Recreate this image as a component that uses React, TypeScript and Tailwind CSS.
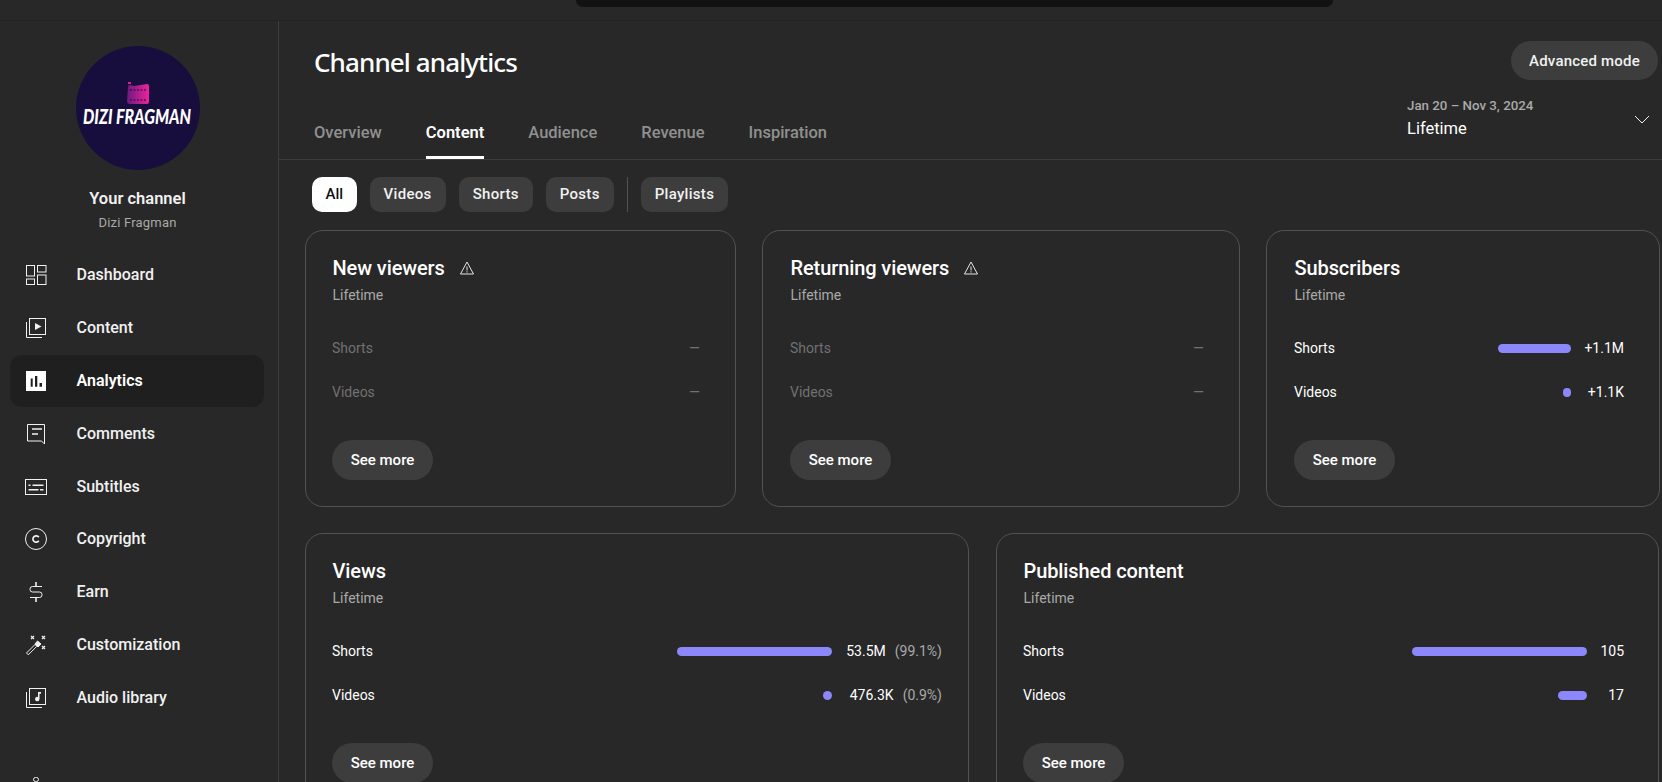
import type { ReactNode } from "react";

const stroke = { fill: "none", stroke: "currentColor", strokeWidth: 1 };

function DashboardIcon() {
  return (
    <svg width="24" height="24" viewBox="0 0 24 24" {...stroke}>
      <rect x="2.5" y="2.5" width="8" height="10.5" />
      <rect x="13.5" y="2.5" width="8.5" height="6.5" />
      <rect x="2.5" y="16" width="8" height="5.5" />
      <rect x="13.5" y="12" width="8.5" height="9.5" />
    </svg>
  );
}

function ContentIcon() {
  return (
    <svg width="24" height="24" viewBox="0 0 24 24" {...stroke}>
      <rect x="5.5" y="2.5" width="16" height="16" />
      <path d="M2.5 6v15.5H18" />
      <path d="M11 7v7l6.5-3.5z" fill="currentColor" stroke="none" />
    </svg>
  );
}

function AnalyticsIcon() {
  return (
    <svg width="24" height="24" viewBox="0 0 24 24">
      <path
        fillRule="evenodd"
        fill="#fff"
        d="M2 2h20v20H2zM6.7 9.5v8.2h2V9.5zM11 7v10.7h2.3V7zM15.5 14v3.7h2.5V14z"
      />
    </svg>
  );
}

function CommentsIcon() {
  return (
    <svg width="24" height="24" viewBox="0 0 24 24" {...stroke}>
      <path d="M3.5 2.5h17v19.5l-3-3H3.5z" />
      <path d="M8 7h10M8 12h6" strokeWidth="1.4" />
    </svg>
  );
}

function SubtitlesIcon() {
  return (
    <svg width="24" height="24" viewBox="0 0 24 24" {...stroke}>
      <rect x="1.5" y="4.5" width="21" height="15" />
      <path d="M4.5 10.3h2M8.5 10.3h11M4.5 14.7h10M16 14.7h3.5" strokeWidth="1.4" />
    </svg>
  );
}

function CopyrightIcon() {
  return (
    <svg width="24" height="24" viewBox="0 0 24 24" {...stroke}>
      <circle cx="12" cy="12" r="10.5" />
      <path d="M14.8 10.2a3.2 3.2 0 1 0 0 3.6" strokeWidth="1.7" />
    </svg>
  );
}

function EarnIcon() {
  return (
    <svg width="24" height="24" viewBox="0 0 24 24" {...stroke}>
      <path d="M18 6.5H8.5a2.5 2.5 0 0 0-2.5 2.5v.5a2.5 2.5 0 0 0 2.5 2.5h7a2.5 2.5 0 0 1 2.5 2.5v.5a2.5 2.5 0 0 1-2.5 2.5H6" />
      <path d="M12 2v4.5M12 17.5V22" strokeWidth="1.6" />
    </svg>
  );
}

function CustomizationIcon() {
  return (
    <svg width="24" height="24" viewBox="0 0 24 24" {...stroke}>
      <path d="M2.5 20l1.8 1.8 8.5-8.5-1.8-1.8z" />
      <path d="M13.5 8l3.5 3-3 3-3-3z" fill="currentColor" />
      <path d="M7 3l3 3M10 3L7 6M18 3l3 3M21 3l-3 3M18 13l3 3M21 13l-3 3" strokeWidth="1.2" />
    </svg>
  );
}

function AudioIcon() {
  return (
    <svg width="24" height="24" viewBox="0 0 24 24" {...stroke}>
      <rect x="5.5" y="2.5" width="16" height="16" />
      <path d="M2.5 6v15.5H18" />
      <path d="M14 6h3v1.8h-1.5v5.2a2.2 2.2 0 1 1-1.5-2.1z" fill="currentColor" stroke="none" />
    </svg>
  );
}

function WarningIcon() {
  return (
    <svg width="16" height="16" viewBox="0 0 16 16" fill="none" stroke="#e5e5e5" strokeWidth="1">
      <path d="M8 2L1.5 14h13z" />
      <path d="M8 6.5v4M8 11.3v1.2" />
    </svg>
  );
}

const navItems: { label: string; icon: ReactNode; active?: boolean }[] = [
  { label: "Dashboard", icon: <DashboardIcon /> },
  { label: "Content", icon: <ContentIcon /> },
  { label: "Analytics", icon: <AnalyticsIcon />, active: true },
  { label: "Comments", icon: <CommentsIcon /> },
  { label: "Subtitles", icon: <SubtitlesIcon /> },
  { label: "Copyright", icon: <CopyrightIcon /> },
  { label: "Earn", icon: <EarnIcon /> },
  { label: "Customization", icon: <CustomizationIcon /> },
  { label: "Audio library", icon: <AudioIcon /> },
];

function Avatar() {
  return (
    <div className="w-[124px] h-[124px] rounded-full bg-[#170e3d] flex flex-col items-center pt-[36px]">
      <svg width="24" height="25" viewBox="0 0 24 25">
        <defs>
          <linearGradient id="film" x1="0" y1="0" x2="1" y2="0">
            <stop offset="0" stopColor="#6d1a80" />
            <stop offset="1" stopColor="#f0229a" />
          </linearGradient>
        </defs>
        <rect x="2" y="0" width="3" height="2" fill="#d020a0" />
        <path d="M2 5q0-2 2-2l4 1 13-2q2 0 2 2v16q0 2-2 2H4q-3 0-3-3z" fill="url(#film)" />
        <path d="M4 8h16M4 18h16" stroke="#170e3d" strokeWidth="1.2" strokeDasharray="2 1.5" />
      </svg>
      <div className="font-['Lato'] font-black italic text-white text-[21px] leading-[22px] -mt-[2px] whitespace-nowrap scale-x-[0.76]">
        DIZI FRAGMAN
      </div>
    </div>
  );
}

function Sidebar() {
  return (
    <aside className="w-[279px] shrink-0 border-r border-[#3d3d3d] flex flex-col">
      <div className="pr-[3px] flex flex-col items-center">
        <div className="mt-[25px]">
          <Avatar />
        </div>
        <div className="mt-[17px] text-[16.5px] leading-[24px] font-semibold text-[#f1f1f1]">Your channel</div>
        <div className="mt-[3px] text-[13px] leading-[18px] text-[#aaaaaa] tracking-[0.2px]">Dizi Fragman</div>
      </div>
      <nav className="mt-[17px] w-full pl-[10px] pr-[14px]">
        {navItems.map((item) => (
          <div
            key={item.label}
            className={
              item.active
                ? "h-[52.8px] flex items-center rounded-[12px] bg-[#1f1f1f] font-semibold text-white"
                : "h-[52.8px] flex items-center rounded-[12px] font-medium text-[#f1f1f1]"
            }
          >
            <div className="w-[66.5px] pl-[14px] shrink-0 flex">{item.icon}</div>
            <span className="text-[16px]">{item.label}</span>
          </div>
        ))}
      </nav>
      <div className="mt-[53px] ml-[33px] w-[6px] h-[6px] rounded-full border border-[#f1f1f1]" />
    </aside>
  );
}

function Chip({ label, active }: { label: string; active?: boolean }) {
  return (
    <button
      className={
        active
          ? "h-[35px] px-[13.5px] rounded-[10px] bg-white text-[#0f0f0f] text-[15px] font-medium"
          : "h-[35px] px-[14px] rounded-[10px] bg-[#3d3d3d] text-[#f1f1f1] text-[15px] font-medium tracking-[0.3px]"
      }
    >
      {label}
    </button>
  );
}

function Row({
  label,
  value,
  pct,
  bar,
  valueWidth,
  muted,
}: {
  label: string;
  value: string;
  pct?: string;
  bar?: number;
  valueWidth?: number;
  muted?: boolean;
}) {
  return (
    <div className="h-[44px] flex items-center justify-between text-[14px]">
      <span className={muted ? "text-[#717171]" : "text-white"}>{label}</span>
      <div className="flex items-center">
        {bar !== undefined && (
          <div className="h-[9px] rounded-full bg-[#8c87fa] mr-[13px]" style={{ width: bar }} />
        )}
        <div className="text-right whitespace-nowrap" style={{ width: valueWidth }}>
          <span className={muted ? "text-[#717171]" : "text-white"}>{value}</span>
          {pct && <span className="ml-[9px] text-[#aaaaaa]">{pct}</span>}
        </div>
      </div>
    </div>
  );
}

function Card({
  title,
  warn,
  className,
  children,
}: {
  title: string;
  warn?: boolean;
  className: string;
  children: ReactNode;
}) {
  return (
    <section className={"border border-[#525252] rounded-[18px] pt-[23px] pb-[26px] " + className}>
      <div className="flex items-center h-[28px] ml-[0.5px]">
        <h2 className="text-[20px] leading-[28px] font-medium text-white tracking-[-0.1px]">{title}</h2>
        {warn && (
          <span className="ml-[14px]">
            <WarningIcon />
          </span>
        )}
      </div>
      <div className="mt-[3px] ml-[0.5px] text-[14px] leading-[20px] text-[#aaaaaa]">Lifetime</div>
      <div className="mt-[21px]">{children}</div>
      <button className="mt-[26px] w-[101px] h-[40px] rounded-full bg-[#3d3d3d] text-white text-[15px] font-medium">
        See more
      </button>
    </section>
  );
}

export default function App() {
  return (
    <div className="w-[1662px] h-[782px] overflow-hidden bg-[#282828] font-['Roboto',sans-serif] flex flex-col">
      <header className="h-[21px] shrink-0 border-b border-[#232323] flex justify-center pl-[247px]">
        <div className="w-[757px] h-[7px] bg-[#121212] rounded-b-[16px]" />
      </header>
      <div className="flex flex-1 min-h-0">
        <Sidebar />
        <main className="flex-1 min-w-0">
          <div className="h-[139px] border-b border-[#3d3d3d] flex flex-col">
            <div className="mt-[20px] h-[39px] flex items-center justify-between pl-[35px] pr-[4px]">
              <h1 className="font-['Noto_Sans',sans-serif] font-medium text-[26px] text-white pt-[4px] tracking-[-0.9px]">
                Channel analytics
              </h1>
              <button className="w-[147px] h-[39px] pt-[1px] rounded-full bg-[#3d3d3d] text-[#f1f1f1] text-[15px] font-medium tracking-[0.2px]">
                Advanced mode
              </button>
            </div>
            <div className="flex flex-1 justify-between pl-[35px]">
              <div className="flex items-end gap-[44px]">
                {["Overview", "Content", "Audience", "Revenue", "Inspiration"].map((tab) => (
                  <div
                    key={tab}
                    className={
                      tab === "Content"
                        ? "pb-[11px] border-b-[3px] border-white text-[16.5px] leading-[24px] font-semibold text-white"
                        : "pb-[14px] text-[16.5px] leading-[24px] font-medium text-[#909090]"
                    }
                  >
                    {tab}
                  </div>
                ))}
              </div>
              <div className="w-[255px] pt-[18px] relative">
                <div className="text-[13.3px] leading-[16px] font-medium text-[#aaaaaa]">Jan 20 – Nov 3, 2024</div>
                <div className="mt-[4px] text-[16.5px] leading-[22px] text-white">Lifetime</div>
                <svg
                  className="absolute left-[226px] top-[33px]"
                  width="18"
                  height="14"
                  viewBox="0 0 18 14"
                  fill="none"
                  stroke="#f1f1f1"
                  strokeWidth="1"
                >
                  <path d="M2 3l7 7 7-7" />
                </svg>
              </div>
            </div>
          </div>
          <div className="mt-[17px] pl-[33px] flex items-center gap-[13px]">
            <Chip label="All" active />
            <Chip label="Videos" />
            <Chip label="Shorts" />
            <Chip label="Posts" />
            <div className="w-px h-[35px] bg-[#525252]" />
            <Chip label="Playlists" />
          </div>
          <div className="mt-[18px] pl-[26px] flex flex-col gap-[26px]">
            <div className="flex gap-[26px]">
              <Card title="New viewers" warn className="w-[431px] pl-[26px] pr-[35px]">
                <Row label="Shorts" value="—" muted />
                <Row label="Videos" value="—" muted />
              </Card>
              <Card title="Returning viewers" warn className="w-[478px] pl-[27px] pr-[35px]">
                <Row label="Shorts" value="—" muted />
                <Row label="Videos" value="—" muted />
              </Card>
              <Card title="Subscribers" className="w-[394px] pl-[27px] pr-[35px]">
                <Row label="Shorts" value="+1.1M" bar={73} valueWidth={40} />
                <Row label="Videos" value="+1.1K" bar={8} valueWidth={40} />
              </Card>
            </div>
            <div className="flex gap-[27px]">
              <Card title="Views" className="w-[664px] pl-[26px] pr-[26px]">
                <Row label="Shorts" value="53.5M" pct="(99.1%)" bar={155} valueWidth={97} />
                <Row label="Videos" value="476.3K" pct="(0.9%)" bar={9} valueWidth={97} />
              </Card>
              <Card title="Published content" className="w-[663px] pl-[26px] pr-[34px]">
                <Row label="Shorts" value="105" bar={175} valueWidth={24} />
                <Row label="Videos" value="17" bar={29} valueWidth={24} />
              </Card>
            </div>
          </div>
        </main>
      </div>
    </div>
  );
}
